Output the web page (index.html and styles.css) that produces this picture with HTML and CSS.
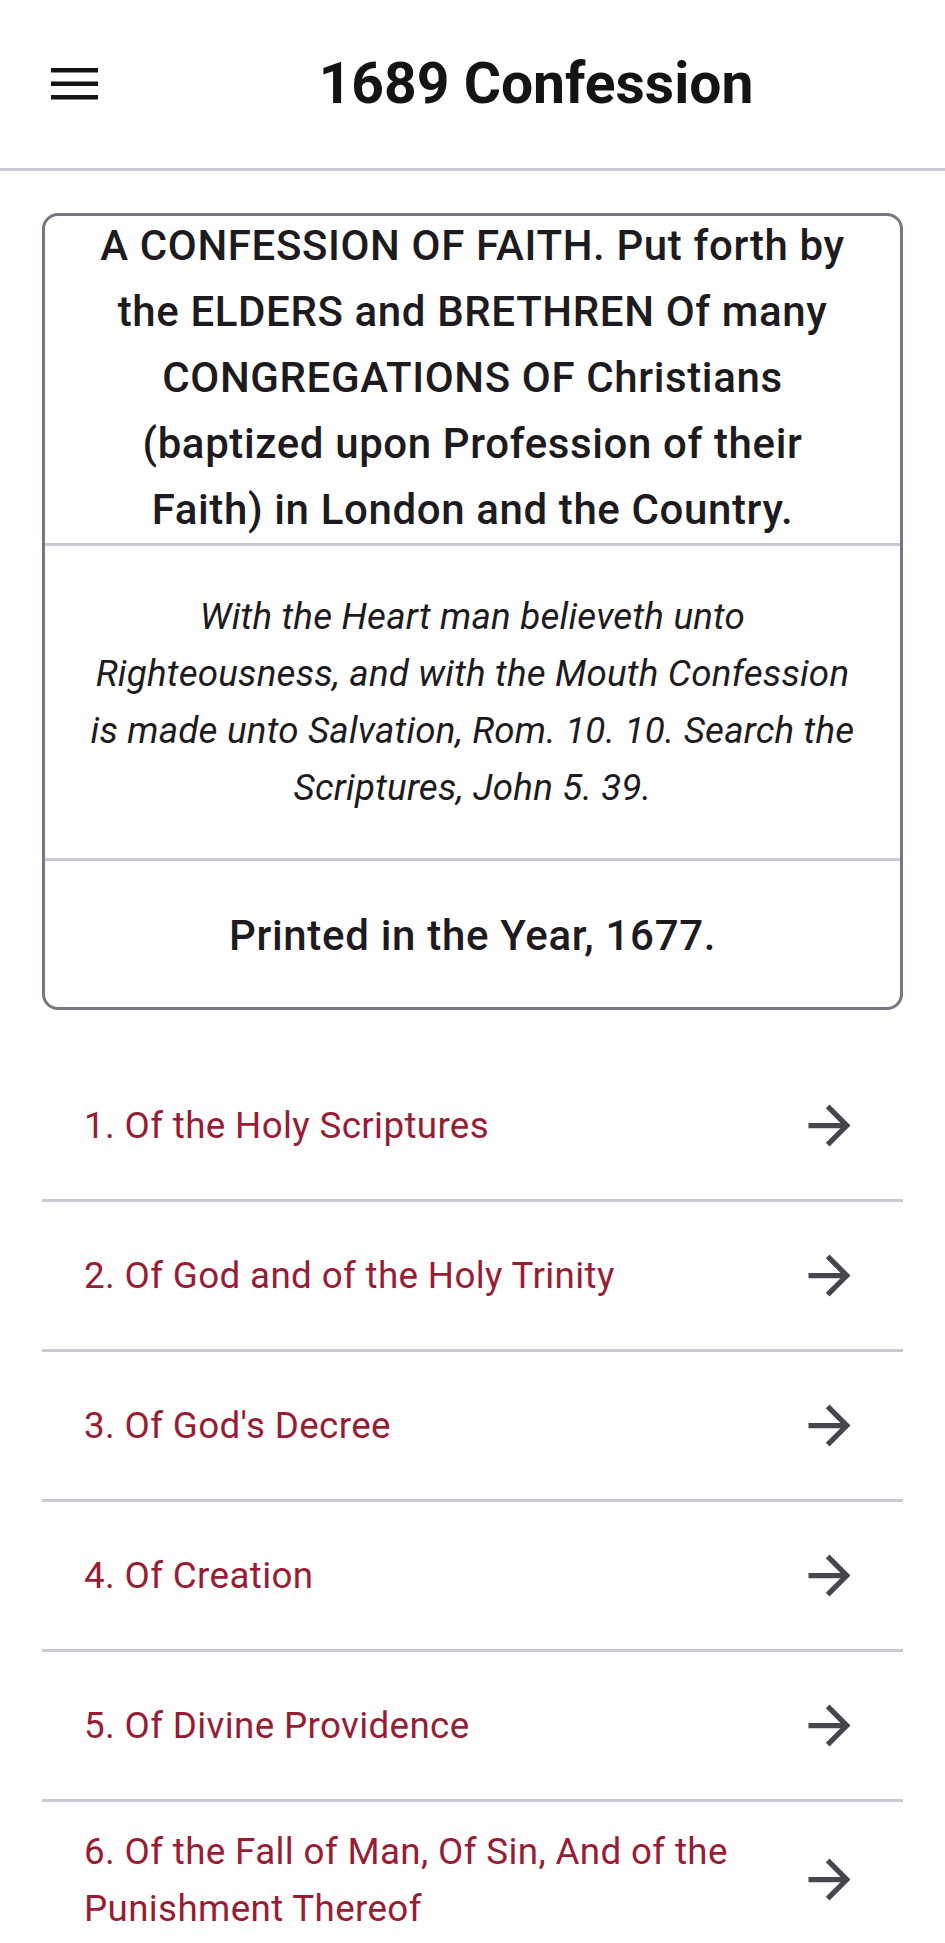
FILE: index.html
```html
<!DOCTYPE html>
<html lang="en">
<head>
<meta charset="utf-8">
<title>1689 Confession</title>
<link rel="stylesheet" href="styles.css">
</head>
<body>
<header class="appbar">
  <div class="appbar-leading">
    <button class="icon-btn" aria-label="Menu">
      <svg class="menu-icon" viewBox="0 0 47 32" width="47" height="32" aria-hidden="true">
        <rect x="0" y="0" width="47" height="4.5"/>
        <rect x="0" y="13.5" width="47" height="4.5"/>
        <rect x="0" y="27" width="47" height="4.5"/>
      </svg>
    </button>
  </div>
  <h1 class="appbar-title">1689 Confession</h1>
</header>
<main class="content">
  <section class="card">
    <div class="card-sec card-heading">A CONFESSION OF FAITH. Put forth by the ELDERS and BRETHREN Of many CONGREGATIONS OF Christians (baptized upon Profession of their Faith) in London and the Country.</div>
    <div class="card-sec card-quote">With the Heart man believeth unto Righteousness, and with the Mouth Confession is made unto Salvation, Rom. 10. 10. Search the Scriptures, John 5. 39.</div>
    <div class="card-sec card-year">Printed in the Year, 1677.</div>
  </section>
  <ul class="chapters">
    <li class="chapter"><a class="chapter-link" href="#"><span class="chapter-text">1. Of the Holy Scriptures</span><svg class="arrow" viewBox="0 0 24 24" aria-hidden="true"><path d="M12 4l-1.41 1.41L16.17 11H4v2h12.17l-5.58 5.59L12 20l8-8z"/></svg></a></li>
    <li class="chapter"><a class="chapter-link" href="#"><span class="chapter-text">2. Of God and of the Holy Trinity</span><svg class="arrow" viewBox="0 0 24 24" aria-hidden="true"><path d="M12 4l-1.41 1.41L16.17 11H4v2h12.17l-5.58 5.59L12 20l8-8z"/></svg></a></li>
    <li class="chapter"><a class="chapter-link" href="#"><span class="chapter-text">3. Of God's Decree</span><svg class="arrow" viewBox="0 0 24 24" aria-hidden="true"><path d="M12 4l-1.41 1.41L16.17 11H4v2h12.17l-5.58 5.59L12 20l8-8z"/></svg></a></li>
    <li class="chapter"><a class="chapter-link" href="#"><span class="chapter-text">4. Of Creation</span><svg class="arrow" viewBox="0 0 24 24" aria-hidden="true"><path d="M12 4l-1.41 1.41L16.17 11H4v2h12.17l-5.58 5.59L12 20l8-8z"/></svg></a></li>
    <li class="chapter"><a class="chapter-link" href="#"><span class="chapter-text">5. Of Divine Providence</span><svg class="arrow" viewBox="0 0 24 24" aria-hidden="true"><path d="M12 4l-1.41 1.41L16.17 11H4v2h12.17l-5.58 5.59L12 20l8-8z"/></svg></a></li>
    <li class="chapter"><a class="chapter-link" href="#"><span class="chapter-text">6. Of the Fall of Man, Of Sin, And of the Punishment Thereof</span><svg class="arrow" viewBox="0 0 24 24" aria-hidden="true"><path d="M12 4l-1.41 1.41L16.17 11H4v2h12.17l-5.58 5.59L12 20l8-8z"/></svg></a></li>
  </ul>
</main>
</body>
</html>
```
FILE: styles.css
```css
* { box-sizing: border-box; }

html, body {
  margin: 0;
  padding: 0;
  background: #ffffff;
  font-family: "Roboto", "Noto Sans", sans-serif;
  color: #1d1b20;
}

.appbar {
  display: flex;
  align-items: center;
  height: 171px;
  border-bottom: 3px solid #cdc8d4;
}

.appbar-leading {
  width: 149px;
  flex: none;
  display: flex;
  justify-content: center;
  align-items: center;
}

.icon-btn {
  border: 0;
  background: none;
  padding: 0;
  margin: 0;
  display: flex;
  cursor: pointer;
}

.menu-icon { fill: #141414; display: block; }

.appbar-title {
  flex: 1;
  margin: 0;
  padding-right: 22px;
  text-align: center;
  font-size: 57px;
  font-weight: 700;
  color: #141414;
  line-height: 1.2;
}

.content {
  padding: 42px 42px 0;
}

.card {
  border: 3px solid #7a7580;
  border-radius: 16px;
  overflow: hidden;
}

.card-sec {
  text-align: center;
  padding-left: 42px;
  padding-right: 42px;
}

.card-sec + .card-sec {
  border-top: 3px solid #cdc8d4;
}

.card-heading {
  font-size: 42px;
  font-weight: 500;
  line-height: 66px;
  letter-spacing: 0.62px;
  color: #1d1b20;
  margin-top: -3px;
  padding-top: 0;
  padding-bottom: 0;
}

.card-quote {
  font-size: 36.75px;
  font-style: italic;
  line-height: 57px;
  letter-spacing: 0.2px;
  padding-top: 42px;
  padding-bottom: 42px;
  color: #1d1b20;
}

.card-year {
  font-size: 42px;
  font-weight: 500;
  line-height: 65.5px;
  letter-spacing: 0.68px;
  padding-top: 42px;
  padding-bottom: 38px;
}

.chapters {
  list-style: none;
  margin: 42px 0 0;
  padding: 0;
}

.chapter {
  border-bottom: 3px solid #cdc8d4;
}

.chapter-link {
  box-sizing: content-box;
  display: flex;
  align-items: center;
  min-height: 105px;
  padding: 21px 42px;
  text-decoration: none;
}

.chapter-text {
  flex: 1;
  font-size: 36.75px;
  line-height: 57px;
  letter-spacing: 0.36px;
  color: #981c34;
}

.arrow {
  flex: none;
  width: 63px;
  height: 63px;
  margin-left: 42px;
  fill: #49454f;
}
```
